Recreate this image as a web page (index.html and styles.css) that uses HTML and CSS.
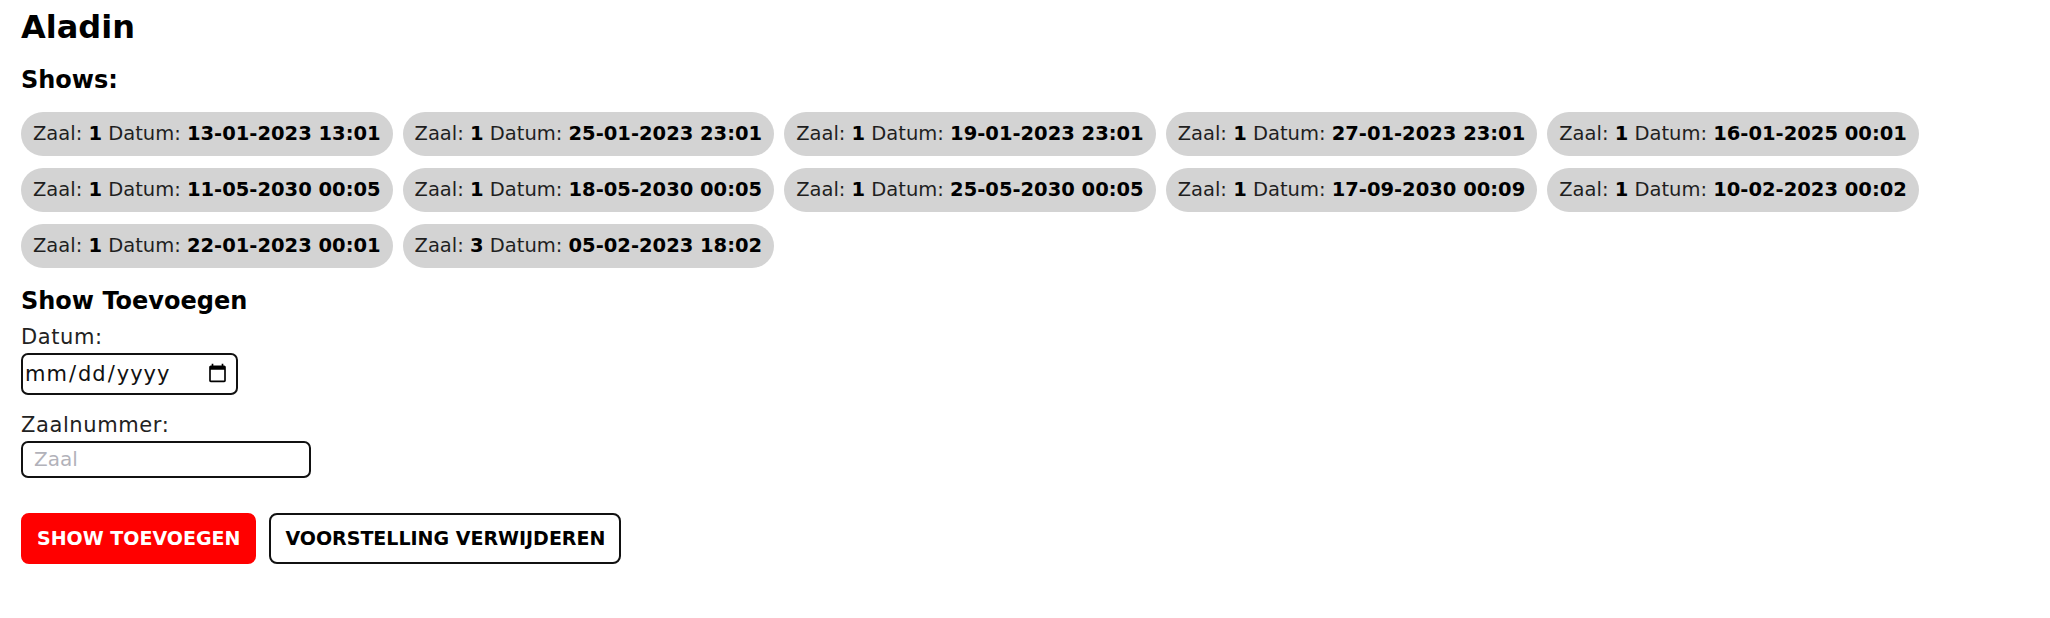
FILE: index.html
```html
<!DOCTYPE html>
<html lang="nl">
<head>
<meta charset="utf-8">
<title>Aladin</title>
<link rel="stylesheet" href="styles.css">
</head>
<body>
<main class="page">
  <h1 class="title">Aladin</h1>
  <h2 class="section-title">Shows:</h2>
  <div class="shows">
    <span class="show">Zaal: <b>1</b> Datum: <b>13-01-2023 13:01</b></span>
    <span class="show">Zaal: <b>1</b> Datum: <b>25-01-2023 23:01</b></span>
    <span class="show">Zaal: <b>1</b> Datum: <b>19-01-2023 23:01</b></span>
    <span class="show">Zaal: <b>1</b> Datum: <b>27-01-2023 23:01</b></span>
    <span class="show">Zaal: <b>1</b> Datum: <b>16-01-2025 00:01</b></span>
    <span class="show">Zaal: <b>1</b> Datum: <b>11-05-2030 00:05</b></span>
    <span class="show">Zaal: <b>1</b> Datum: <b>18-05-2030 00:05</b></span>
    <span class="show">Zaal: <b>1</b> Datum: <b>25-05-2030 00:05</b></span>
    <span class="show">Zaal: <b>1</b> Datum: <b>17-09-2030 00:09</b></span>
    <span class="show">Zaal: <b>1</b> Datum: <b>10-02-2023 00:02</b></span>
    <span class="show">Zaal: <b>1</b> Datum: <b>22-01-2023 00:01</b></span>
    <span class="show">Zaal: <b>3</b> Datum: <b>05-02-2023 18:02</b></span>
  </div>
  <h3 class="section-title">Show Toevoegen</h3>
  <form class="form">
    <label class="field-label" for="datum">Datum:</label>
    <input class="date-input" id="datum" type="date">
    <label class="field-label field-label-next" for="zaal">Zaalnummer:</label>
    <input class="text-input" id="zaal" type="text" placeholder="Zaal">
    <div class="actions">
      <button class="btn btn-primary" type="button">SHOW TOEVOEGEN</button>
      <button class="btn btn-outline" type="button">VOORSTELLING VERWIJDEREN</button>
    </div>
  </form>
</main>
</body>
</html>
```
FILE: styles.css
```css
body {
  margin: 0;
  background: #ffffff;
  color: #111111;
  font-family: "DejaVu Sans", sans-serif;
}

.page {
  padding: 7px 0 0 21px;
}

.title {
  margin: 0;
  font-size: 32px;
  line-height: 40px;
  font-weight: 700;
  color: #000000;
}

.section-title {
  margin: 17.7px 0 0;
  font-size: 24px;
  line-height: 30px;
  font-weight: 700;
  color: #000000;
}

.shows {
  display: flex;
  flex-wrap: wrap;
  gap: 12px 10px;
  margin-top: 17.3px;
}

.show {
  display: inline-flex;
  align-items: center;
  height: 44px;
  padding: 0 12px;
  border-radius: 22px;
  background: #d3d3d3;
  color: #1f1f1f;
  font-size: 19.5px;
  white-space: pre;
}

.show b {
  color: #000000;
}

.form {
  display: flex;
  flex-direction: column;
  align-items: flex-start;
}

.field-label {
  margin-top: 8px;
  font-size: 21px;
  line-height: 26px;
  letter-spacing: 0.6px;
  color: #222222;
}

.field-label-next {
  margin-top: 17px;
}

.date-input {
  box-sizing: border-box;
  margin: 3px 0 0;
  width: 217px;
  height: 42px;
  padding: 0 6px 0 1px;
  border: 2px solid #111111;
  border-radius: 7px;
  font-family: inherit;
  font-size: 21px;
  letter-spacing: 1px;
  color: #111111;
  background: #ffffff;
}

.text-input {
  box-sizing: border-box;
  margin: 3px 0 0;
  width: 290px;
  height: 37px;
  padding: 0 11px;
  border: 2px solid #111111;
  border-radius: 7px;
  font-family: inherit;
  font-size: 20px;
  color: #111111;
  background: #ffffff;
}

.text-input::placeholder {
  color: #b2b2ba;
}

.actions {
  display: flex;
  gap: 13px;
  margin-top: 35px;
}

.btn {
  box-sizing: border-box;
  height: 51px;
  padding: 0 14px;
  border: 2px solid transparent;
  border-radius: 8px;
  font-family: inherit;
  font-size: 19px;
  font-weight: 700;
  cursor: pointer;
}

.btn-primary {
  background: #ff0000;
  border-color: #ff0000;
  color: #ffffff;
}

.btn-outline {
  background: #ffffff;
  border-color: #111111;
  color: #000000;
}
```
